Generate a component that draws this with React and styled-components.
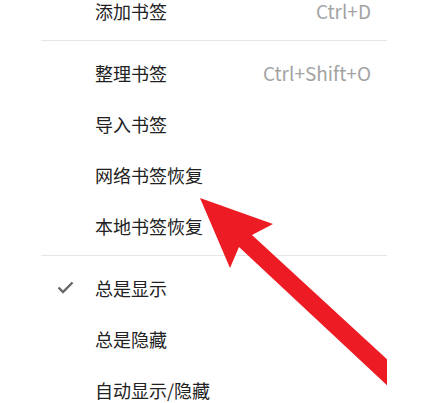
import styled, { createGlobalStyle } from 'styled-components';

const GlobalStyle = createGlobalStyle`
  html, body {
    margin: 0;
    padding: 0;
    background: #fff;
    overflow: hidden;
  }
  body {
    font-family: "Noto Sans CJK SC", "Noto Sans", sans-serif;
  }
`;

const Page = styled.div`
  width: 430px;
  height: 403px;
  overflow: hidden;
  background: #fff;
  display: flex;
  padding-left: 41px;
  box-sizing: border-box;
`;

const Panel = styled.div`
  position: relative;
  width: 346px;
  display: flex;
  flex-direction: column;
  overflow: hidden;
`;

const Item = styled.div`
  display: flex;
  align-items: center;
  box-sizing: border-box;
  height: ${(p) => (p.$cut ? '37px' : '51px')};
  padding: 0 16px ${(p) => (p.$cut ? '16px' : '2px')} 0;
  font-size: 18px;
  color: #222;
  line-height: 1;
  flex-shrink: 0;
`;

const CheckCol = styled.div`
  width: 54px;
  display: flex;
  align-items: center;
  padding-left: 16px;
  box-sizing: border-box;
  flex-shrink: 0;
`;

const Label = styled.span`
  flex: 1;
  white-space: nowrap;
`;

const Shortcut = styled.span`
  color: #a3a3a3;
  font-size: 19px;
  white-space: nowrap;
`;

const Separator = styled.div`
  height: 1px;
  flex-shrink: 0;
  margin: 3px 0 7px;
  background: #e6e6e6;
`;

const ArrowLayer = styled.svg`
  position: absolute;
  left: -41px;
  top: 0;
  width: 430px;
  height: 403px;
  pointer-events: none;
`;

function Check() {
  return (
    <svg width="17" height="13" viewBox="0 0 17 13">
      <polyline points="1.5,6.5 6,11 15.5,1.5" fill="none" stroke="#666" strokeWidth="2.4" />
    </svg>
  );
}

const groups = [
  [
    { label: '添加书签', shortcut: 'Ctrl+D', cut: true },
  ],
  [
    { label: '整理书签', shortcut: 'Ctrl+Shift+O' },
    { label: '导入书签' },
    { label: '网络书签恢复' },
    { label: '本地书签恢复' },
  ],
  [
    { label: '总是显示', checked: true },
    { label: '总是隐藏' },
    { label: '自动显示/隐藏' },
  ],
];

export default function App() {
  return (
    <Page>
      <GlobalStyle />
      <Panel>
        {groups.map((group, gi) => [
          gi > 0 && <Separator key={`sep-${gi}`} />,
          ...group.map((item) => (
            <Item key={item.label} $cut={item.cut}>
              <CheckCol>{item.checked && <Check />}</CheckCol>
              <Label>{item.label}</Label>
              {item.shortcut && <Shortcut>{item.shortcut}</Shortcut>}
            </Item>
          )),
        ])}
        <ArrowLayer viewBox="0 0 430 403">
          <polygon
            points="200,198 273,224 252,235 390,362 390,388 239,247 230,268"
            fill="#ed1c24"
          />
        </ArrowLayer>
      </Panel>
    </Page>
  );
}
